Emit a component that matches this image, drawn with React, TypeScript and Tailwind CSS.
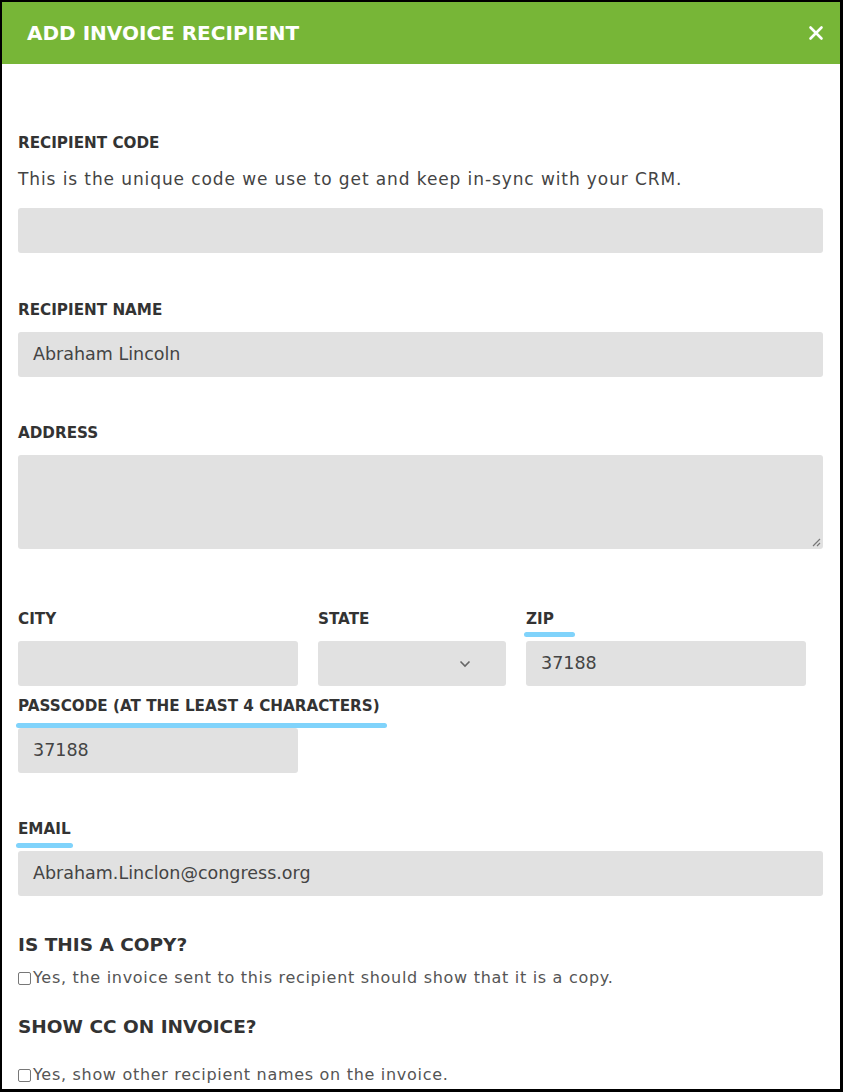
import React from "react";

const Bar = ({ w, top }: { w: string; top: string }) => (
  <span className={`absolute left-[-2px] ${top} ${w} h-[5px] rounded-full bg-[#80d3fb]`} />
);

function Label({ children, bar }: { children: React.ReactNode; bar?: React.ReactNode }) {
  return (
    <div className="relative w-fit text-[15.2px] leading-[20px] font-bold text-[#333333]">
      {children}
      {bar}
    </div>
  );
}

function Field({ value, className = "" }: { value?: string; className?: string }) {
  return (
    <div className={`h-[45px] rounded-[3px] bg-[#e1e1e1] flex items-center px-[15px] text-[17.5px] text-[#444] ${className}`}>
      {value}
    </div>
  );
}

function Check({ text }: { text: string }) {
  return (
    <div className="flex items-center text-[16px] leading-[22px] tracking-[0.7px] text-[#555]">
      <span className="w-[13px] h-[13px] border border-[#777] rounded-[2px] mr-[2px] bg-white" />
      {text}
    </div>
  );
}

export default function App() {
  return (
    <div
      className="w-[843px] h-[1092px] bg-white border-l-2 border-t-2 border-r-[3px] border-b-[3px] border-black overflow-hidden"
      style={{ fontFamily: '"DejaVu Sans", "Open Sans", sans-serif' }}
    >
      {/* Header */}
      <div className="h-[62px] bg-[#77b637] flex items-center justify-between pl-[25px] pr-[16px]">
        <h1 className="text-white font-bold text-[20px] leading-[24px]">ADD INVOICE RECIPIENT</h1>
        <svg width="16" height="16" viewBox="0 0 16 16" className="text-white">
          <path d="M2.5 2.5 L13.5 13.5 M13.5 2.5 L2.5 13.5" stroke="currentColor" strokeWidth="2.6" strokeLinecap="round" />
        </svg>
      </div>

      <div className="pl-4 pr-[17px] pt-[69px]">
        <Label>RECIPIENT CODE</Label>
        <p className="mt-[14px] text-[17px] leading-[24px] tracking-[0.9px] text-[#444]">
          This is the unique code we use to get and keep in-sync with your CRM.
        </p>
        <Field className="mt-[17px]" />

        <div className="mt-[47px]">
          <Label>RECIPIENT NAME</Label>
        </div>
        <Field className="mt-[12px]" value="Abraham Lincoln" />

        <div className="mt-[46px]">
          <Label>ADDRESS</Label>
        </div>
        <div className="relative mt-[12px] h-[94px] rounded-[3px] bg-[#e1e1e1]">
          <svg width="10" height="10" viewBox="0 0 10 10" className="absolute right-[2px] bottom-[2px]">
            <path d="M9 2 L2 9 M9 6 L6 9" stroke="#777" strokeWidth="1.2" />
          </svg>
        </div>

        <div className="mt-[60px] flex gap-5 w-[790px]">
          <div className="w-[280px]">
            <Label>CITY</Label>
            <Field className="mt-[12px]" />
          </div>
          <div className="w-[188px]">
            <Label>STATE</Label>
            <div className="mt-[12px] h-[45px] rounded-[3px] bg-[#e1e1e1] flex items-center justify-end pr-[35px]">
              <svg width="12" height="8" viewBox="0 0 12 8">
                <path d="M1.5 1.5 L6 6 L10.5 1.5" fill="none" stroke="#666" strokeWidth="1.6" />
              </svg>
            </div>
          </div>
          <div className="w-[280px]">
            <Label bar={<Bar w="w-[51px]" top="top-[23px]" />}>ZIP</Label>
            <Field className="mt-[12px] text-[16.5px]" value="37188" />
          </div>
        </div>

        <div className="mt-[10px] relative z-10">
          <Label bar={<Bar w="w-[371px]" top="top-[27px]" />}>PASSCODE (AT THE LEAST 4 CHARACTERS)</Label>
        </div>
        <Field className="mt-[12px] w-[280px] text-[16.5px]" value="37188" />

        <div className="mt-[46px]">
          <Label bar={<Bar w="w-[57px]" top="top-[24px]" />}>EMAIL</Label>
        </div>
        <Field className="mt-[12px] h-[44px]" value="Abraham.Linclon@congress.org" />

        <div className="mt-[38px] text-[18.5px] leading-[22px] font-bold text-[#333]">IS THIS A COPY?</div>
        <div className="mt-[11px]">
          <Check text="Yes, the invoice sent to this recipient should show that it is a copy." />
        </div>
        <div className="mt-[27px] text-[18.5px] leading-[22px] font-bold text-[#333]">SHOW CC ON INVOICE?</div>
        <div className="mt-[26px]">
          <Check text="Yes, show other recipient names on the invoice." />
        </div>
      </div>
    </div>
  );
}
